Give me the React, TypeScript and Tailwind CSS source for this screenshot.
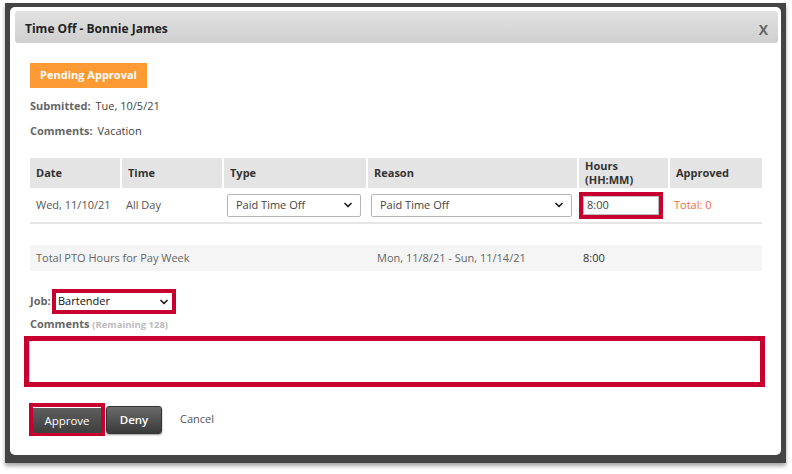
import React from 'react';
import { ChevronDown } from 'lucide-react';

const font = { fontFamily: '"Open Sans", "Liberation Sans", sans-serif' };

const Select: React.FC<{ value: string; className?: string }> = ({ value, className = '' }) => (
  <div
    className={`flex items-center justify-between bg-white border border-[#b5b5b5] rounded-[2px] pl-[8px] pr-[6px] text-[11px] text-[#444] ${className}`}
  >
    <span>{value}</span>
    <ChevronDown className="w-[12px] h-[12px] text-[#222]" strokeWidth={3.5} />
  </div>
);

const columns = [
  { label: 'Date', w: 'w-[90px]' },
  { label: 'Time', w: 'w-[102px]' },
  { label: 'Type', w: 'w-[144px]' },
  { label: 'Reason', w: 'w-[211px]' },
  { label: 'Hours\n(HH:MM)', w: 'w-[91px]' },
  { label: 'Approved', w: 'w-[94px]' },
];

export default function App() {
  return (
    <div className="w-[792px] h-[474px] bg-white overflow-hidden" style={font}>
      <div className="ml-[5px] mt-[3px] w-[781px] h-[460px] bg-[#444444] pl-[5px] pr-[5px] pt-[4px] pb-[8px] shadow-[0_3px_4px_rgba(0,0,0,0.35)]">
        <div className="w-full h-full bg-white rounded-[5px] pt-[4px]">
          {/* header */}
          <div className="ml-[5px] mr-[3px] h-[32px] rounded-[3px] bg-gradient-to-b from-[#e2e2e2] to-[#cfcfcf] flex items-center justify-between pt-[4px] pl-[10px] pr-[10px]">
            <span className="text-[12px] font-bold text-[#222]">Time Off - Bonnie James</span>
            <span className="text-[14px] font-bold text-[#666]">X</span>
          </div>

          <div className="pl-[20px]">
            <div className="mt-[20px] w-[117px] h-[25px] bg-[#fd9a34] flex items-center justify-center text-[11px] font-bold text-white">
              Pending Approval
            </div>

            <div className="mt-[10px] h-[16px] flex items-center text-[11px]">
              <span className="font-bold text-[#666]">Submitted:</span>
              <span className="ml-[5px] text-[#444]">Tue, 10/5/21</span>
            </div>
            <div className="mt-[9px] h-[16px] flex items-center text-[11px]">
              <span className="font-bold text-[#666]">Comments:</span>
              <span className="ml-[5px] text-[#444]">Vacation</span>
            </div>

            {/* table */}
            <div className="mt-[19px] w-[732px]">
              <div className="flex h-[30px] bg-[#e4e4e4]">
                {columns.map((c, i) => (
                  <div
                    key={c.label}
                    className={`${c.w} flex items-center px-[6px] text-[11px] font-bold text-[#333] leading-[14px] whitespace-pre-line ${i > 0 ? 'border-l-2 border-white' : ''}`}
                  >
                    {c.label}
                  </div>
                ))}
              </div>
              <div className="flex h-[36px] items-center border-b-2 border-[#e6e6e6] text-[11px] text-[#555]">
                <div className="w-[90px] px-[6px]">Wed, 11/10/21</div>
                <div className="w-[102px] px-[6px]">All Day</div>
                <div className="w-[144px] pl-[5px]">
                  <Select value="Paid Time Off" className="w-[134px] h-[23px]" />
                </div>
                <div className="w-[211px] pl-[5px]">
                  <Select value="Paid Time Off" className="w-[201px] h-[23px]" />
                </div>
                <div className="w-[91px] pl-[2px]">
                  <div className="w-[84px] h-[27px] border-[4px] border-[#c8002f] bg-white">
                    <div className="h-full border border-[#bbb] flex items-center pl-[3px] text-[11px] text-[#444]">8:00</div>
                  </div>
                </div>
                <div className="w-[94px] px-[6px] text-[#f26a3c]">Total: 0</div>
              </div>

              <div className="mt-[21px] h-[26px] bg-[#f5f5f5] flex items-center text-[11px] text-[#666]">
                <div className="w-[347px] pl-[6px]">Total PTO Hours for Pay Week</div>
                <div className="w-[206px]">Mon, 11/8/21 - Sun, 11/14/21</div>
                <div className="text-[#333]">8:00</div>
              </div>
            </div>

            {/* job */}
            <div className="mt-[18px] flex items-center h-[25px]">
              <span className="text-[11px] font-bold text-[#666] w-[22px]">Job:</span>
              <div className="w-[124px] h-[25px] border-[4px] border-[#c8002f] bg-white">
                <Select value="Bartender" className="h-full border-none rounded-none !pl-[2px] !pr-[2px] !text-[#111]" />
              </div>
            </div>
            <div className="mt-[2px] text-[11px] font-bold text-[#666] leading-[16px]">
              Comments <span className="text-[9.5px] text-[#bbb]">(Remaining 128)</span>
            </div>

            <div className="mt-[3px] -ml-[6px] w-[741px] h-[51px] border-[5px] border-[#c8002f] bg-white">
              <div className="h-full border-l border-[#ccc]" />
            </div>

            {/* buttons */}
            <div className="mt-[16px] -ml-[1px] flex items-center">
              <div className="w-[76px] h-[33px] border-[4px] border-[#c8002f]">
                <button className="w-full h-full bg-gradient-to-b from-[#5e5e5e] to-[#3f3f3f] text-white text-[11.5px]">
                  Approve
                </button>
              </div>
              <button className="ml-[1px] w-[56px] h-[28px] rounded-[3px] border border-[#333] bg-gradient-to-b from-[#6b6b6b] to-[#3a3a3a] text-white text-[11.5px] font-semibold shadow-[0_1px_2px_rgba(0,0,0,0.4)]">
                Deny
              </button>
              <span className="ml-[18px] text-[11px] text-[#555]">Cancel</span>
            </div>
          </div>
        </div>
      </div>
    </div>
  );
}
